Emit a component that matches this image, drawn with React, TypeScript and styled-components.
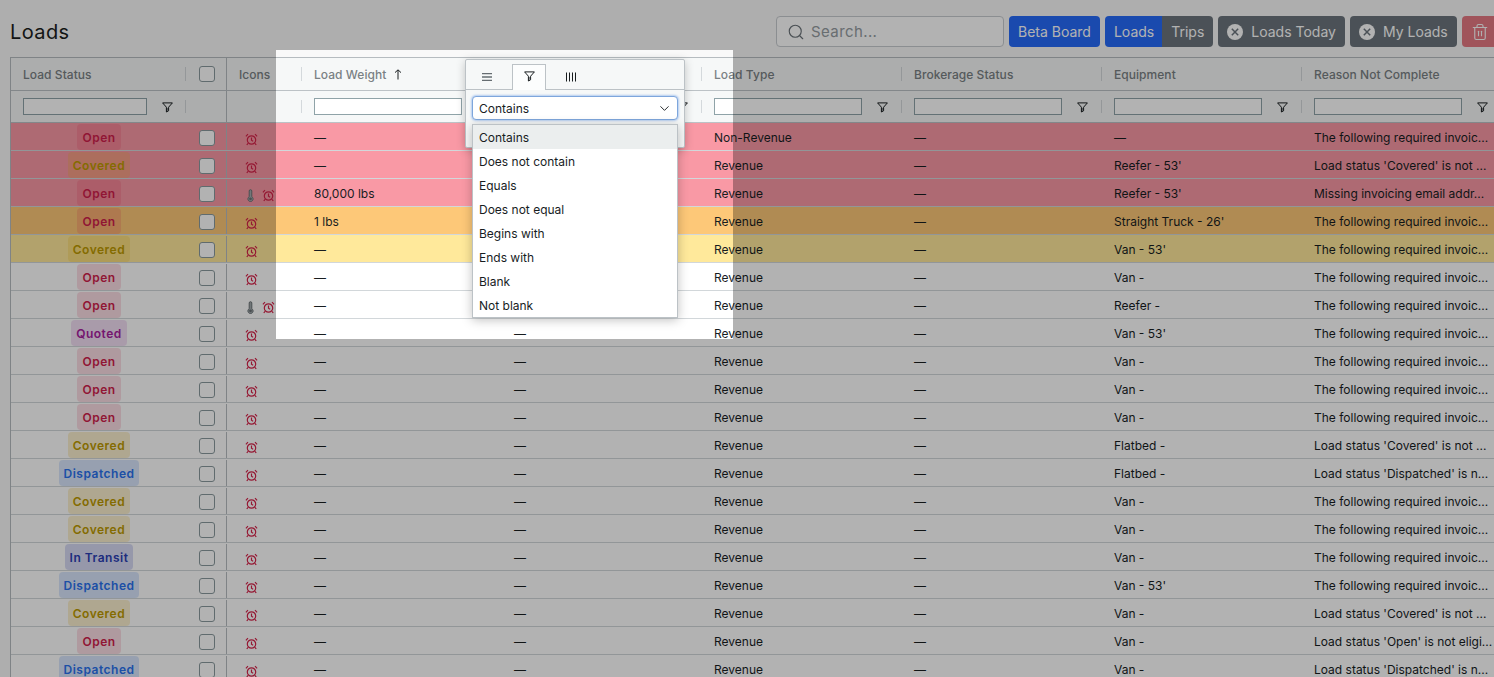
import React from 'react'
import styled, { createGlobalStyle } from 'styled-components'
import { ChevronDown, Search, Trash2 } from 'lucide-react'

const COLUMNS = '175px 41px 75px 200px 200px 200px 200px 200px 200px'

type Tone = 'red' | 'orange' | 'yellow' | 'none'
type Status = 'Open' | 'Covered' | 'Quoted' | 'Dispatched' | 'In Transit'

interface Load {
  status: Status
  tone?: Tone
  hot?: boolean
  weight?: string
  type?: string
  equipment: string
  reason: string
}

const REQUIRED = 'The following required invoic...'
const COVERED = "Load status 'Covered' is not ..."
const DISPATCHED = "Load status 'Dispatched' is n..."

const loads: Load[] = [
  { status: 'Open', tone: 'red', type: 'Non-Revenue', equipment: '—', reason: REQUIRED },
  { status: 'Covered', tone: 'red', equipment: "Reefer - 53'", reason: COVERED },
  { status: 'Open', tone: 'red', hot: true, weight: '80,000 lbs', equipment: "Reefer - 53'", reason: 'Missing invoicing email addr...' },
  { status: 'Open', tone: 'orange', weight: '1 lbs', equipment: "Straight Truck - 26'", reason: REQUIRED },
  { status: 'Covered', tone: 'yellow', equipment: "Van - 53'", reason: REQUIRED },
  { status: 'Open', equipment: 'Van -', reason: REQUIRED },
  { status: 'Open', hot: true, equipment: 'Reefer -', reason: REQUIRED },
  { status: 'Quoted', equipment: "Van - 53'", reason: REQUIRED },
  { status: 'Open', equipment: 'Van -', reason: REQUIRED },
  { status: 'Open', equipment: 'Van -', reason: REQUIRED },
  { status: 'Open', equipment: 'Van -', reason: REQUIRED },
  { status: 'Covered', equipment: 'Flatbed -', reason: COVERED },
  { status: 'Dispatched', equipment: 'Flatbed -', reason: DISPATCHED },
  { status: 'Covered', equipment: 'Van -', reason: REQUIRED },
  { status: 'Covered', equipment: 'Van -', reason: REQUIRED },
  { status: 'In Transit', equipment: 'Van -', reason: REQUIRED },
  { status: 'Dispatched', equipment: "Van - 53'", reason: REQUIRED },
  { status: 'Covered', equipment: 'Van -', reason: COVERED },
  { status: 'Open', equipment: 'Van -', reason: "Load status 'Open' is not eligi..." },
  { status: 'Dispatched', equipment: 'Van -', reason: DISPATCHED },
]

const filterOptions = ['Contains', 'Does not contain', 'Equals', 'Does not equal', 'Begins with', 'Ends with', 'Blank', 'Not blank']

const toneColors: Record<Tone, string> = {
  red: '#f999a5',
  orange: '#fdc878',
  yellow: '#ffe99b',
  none: '#ffffff',
}

const statusColors: Record<Status, { fg: string; bg: string }> = {
  Open: { fg: '#d01f4c', bg: 'rgba(225, 29, 72, 0.15)' },
  Covered: { fg: '#bd9a00', bg: 'rgba(234, 179, 8, 0.2)' },
  Quoted: { fg: '#a8219f', bg: 'rgba(168, 40, 180, 0.15)' },
  Dispatched: { fg: '#2a72ee', bg: 'rgba(59, 130, 246, 0.2)' },
  'In Transit': { fg: '#2b3fb5', bg: 'rgba(55, 70, 200, 0.2)' },
}

const GlobalStyle = createGlobalStyle`
  html, body {
    margin: 0;
    height: 100%;
    overflow: hidden;
    background: #f9f9f9;
    font-family: Inter, "Liberation Sans", sans-serif;
  }
`

const Page = styled.div`
  position: relative;
  width: 1494px;
  height: 677px;
  overflow: hidden;
`

const Toolbar = styled.div`
  display: flex;
  align-items: center;
  height: 31px;
  padding: 16px 0 10px 10px;
  white-space: nowrap;
`

const Title = styled.h1`
  flex: 0 0 auto;
  width: 766px;
  margin: 0;
  font-size: 20px;
  font-weight: 400;
  letter-spacing: 0.4px;
  color: #1a1d20;
`

const SearchBox = styled.div`
  flex: 0 0 auto;
  display: flex;
  align-items: center;
  gap: 6px;
  box-sizing: border-box;
  width: 228px;
  height: 31px;
  margin-right: 5px;
  padding: 0 10px;
  border: 1px solid #c8ccd0;
  border-radius: 4px;
  background: #ffffff;
  color: #6a7278;
  font-size: 15px;
  letter-spacing: 0.4px;
`

const Placeholder = styled.span`
  color: #959ca2;
`

const Button = styled.div<{ $bg?: string }>`
  flex: 0 0 auto;
  display: flex;
  align-items: center;
  gap: 8px;
  box-sizing: border-box;
  height: 31px;
  margin-right: 5px;
  padding: 0 9px;
  border-radius: 4px;
  background: ${(p) => p.$bg || '#6c757d'};
  color: #ffffff;
  font-size: 14px;
`

const Segments = styled.div`
  flex: 0 0 auto;
  display: flex;
  height: 31px;
  margin-right: 5px;
  border-radius: 4px;
  overflow: hidden;
`

const Segment = styled(Button)`
  margin: 0;
  border-radius: 0;

  &:first-child {
    padding-right: 8px;
  }
`

const DeleteButton = styled(Button)`
  background: #dc3545;
  opacity: 0.65;
  width: 100px;
`

const Grid = styled.div`
  margin-left: 10px;
  border: 1px solid #b6bcc0;
  border-right: 0;
  width: 1600px;
  font-size: 12px;
  color: #181d1f;
`

const HeadRow = styled.div`
  display: grid;
  grid-template-columns: ${COLUMNS};
  height: 33px;
  background: #f6f8f8;
  border-bottom: 1px solid #bcc2c6;
  box-sizing: border-box;
`

const FilterRow = styled(HeadRow)`
  height: 32px;
`

const HeadCell = styled.div<{ $sep?: boolean; $rule?: boolean; $check?: boolean }>`
  position: relative;
  display: flex;
  align-items: center;
  justify-content: ${(p) => (p.$check ? 'center' : 'flex-start')};
  min-width: 0;
  padding: ${(p) => (p.$check ? '0 0 0 2px' : '0 12px')};
  font-weight: 500;
  letter-spacing: 0.05px;
  color: #7a8184;
  border-right: ${(p) => (p.$rule ? '1px solid #b6bcc0' : '0')};
  box-sizing: border-box;

  ${(p) =>
    p.$sep &&
    `&::after {
      content: '';
      position: absolute;
      right: 0;
      top: 9px;
      bottom: 9px;
      width: 1px;
      background: #d4d9dc;
    }`}
`

const SortArrow = styled.svg`
  margin-left: 8px;
  color: #181d1f;
`

const FilterInput = styled.div`
  box-sizing: border-box;
  width: 148px;
  height: 17px;
  flex: 0 0 auto;
  border: 1px solid #8fa3a8;
  background: #ffffff;
`

const StatusInput = styled(FilterInput)`
  width: 124px;
`

const FunnelSlot = styled.span`
  display: flex;
  margin: 1px 0 0 15px;
  color: #181d1f;
`

const Row = styled.div<{ $tone: Tone }>`
  display: grid;
  grid-template-columns: ${COLUMNS};
  height: 28px;
  box-sizing: border-box;
  padding-top: 1px;
  background: ${(p) => toneColors[p.$tone]};
  border-bottom: 1px solid #d2d7da;
`

const Cell = styled.div`
  display: flex;
  align-items: center;
  min-width: 0;
  padding: 0 12px;
  white-space: nowrap;
`

const StatusCell = styled(Cell)`
  justify-content: center;
  padding: 0 0 0 1px;
`

const CheckCell = styled(Cell)`
  justify-content: center;
  padding: 1px 0 0 2px;
  border-right: 1px solid #b6bcc0;
`

const IconsCell = styled(Cell)`
  gap: 8px;
  padding: 4px 0 0 18px;
`

const Pill = styled.span<{ $status: Status }>`
  display: flex;
  align-items: center;
  height: 26px;
  padding: 0 5px;
  border-radius: 4px;
  font-weight: 600;
  letter-spacing: 0.5px;
  color: ${(p) => statusColors[p.$status].fg};
  background: ${(p) => statusColors[p.$status].bg};
`

const Checkbox = styled.span`
  box-sizing: border-box;
  width: 16px;
  height: 16px;
  border: 1px solid #8a9a9e;
  border-radius: 3px;
  background: #ffffff;
`

const Spotlight = styled.div`
  position: absolute;
  left: 276px;
  top: 50px;
  width: 457px;
  height: 289px;
  box-shadow: 0 0 0 2000px rgba(0, 0, 0, 0.3);
`

const Popup = styled.div`
  position: absolute;
  left: 189px;
  top: 9px;
  box-sizing: border-box;
  width: 220px;
  height: 89px;
  background: #f6f8f8;
  border: 1px solid #bcc2c6;
  border-radius: 2px;
  box-shadow: 0 2px 10px rgba(0, 0, 0, 0.22);
  font-size: 12px;
  color: #181d1f;
`

const TabBar = styled.div`
  display: flex;
  gap: 8px;
  height: 30px;
  box-sizing: border-box;
  padding: 4px 0 0 4px;
  border-bottom: 1px solid #bcc2c6;
`

const Tab = styled.div<{ $active?: boolean }>`
  display: flex;
  align-items: center;
  justify-content: center;
  box-sizing: border-box;
  width: 34px;
  height: 26px;
  padding-bottom: 2px;
  border: 1px solid ${(p) => (p.$active ? '#bcc2c6' : 'transparent')};
  border-bottom: 0;
  background: ${(p) => (p.$active ? '#fcfdfd' : 'transparent')};
  color: #666d71;
`

const ActiveFunnel = styled.span`
  display: flex;
  color: #181d1f;
`

const SelectBox = styled.div`
  display: flex;
  align-items: center;
  justify-content: space-between;
  box-sizing: border-box;
  width: 206px;
  height: 24px;
  margin: 6px 0 0 6px;
  padding: 0 5px 0 6px;
  background: #ffffff;
  border: 1px solid #7ea6dc;
  border-radius: 4px;
  box-shadow: 0 0 2px 1px rgba(80, 140, 230, 0.4);
`

const OptionList = styled.div`
  position: absolute;
  left: 6px;
  top: 64px;
  width: 206px;
  box-sizing: border-box;
  background: #ffffff;
  border: 1px solid #bcc2c6;
  box-shadow: 0 2px 10px rgba(0, 0, 0, 0.25);
`

const Option = styled.div<{ $active?: boolean }>`
  display: flex;
  align-items: center;
  height: 24px;
  padding: 0 6px;
  background: ${(p) => (p.$active ? '#ebeeee' : '#ffffff')};
`

const Funnel = () => (
  <svg width="11" height="11" viewBox="0 0 11 11" fill="none" stroke="currentColor" strokeWidth="1">
    <path d="M.6.9h9.8L6.6 5.2v3.6L4.4 10V5.2z" />
    <path d="M5.2 8.8V6" strokeWidth="1.3" opacity="0.6" />
  </svg>
)

const Clock = () => (
  <svg width="13" height="13" viewBox="0 0 13 13" fill="none" stroke="#d6234a" strokeWidth="1.2">
    <circle cx="6.5" cy="7" r="4.2" />
    <path d="M6.5 4.6v2.6l1.6 1M.9 3.4 3 1.2M12.1 3.4 10 1.2M3 10.4 1.8 12M10 10.4l1.2 1.6" />
  </svg>
)

const Thermometer = styled(({ className }: { className?: string }) => (
  <svg className={className} width="7" height="13" viewBox="0 0 7 13" fill="#a3abae" stroke="#6a7276" strokeWidth="1">
    <path d="M2.2 2a1.3 1.3 0 0 1 2.6 0v5.7a2.6 2.6 0 1 1-2.6 0z" />
    <circle cx="3.5" cy="9.8" r="1.4" fill="#6a7276" stroke="none" />
  </svg>
))`
  margin-left: 2px;
`

const MenuIcon = () => (
  <svg width="12" height="12" viewBox="0 0 12 12" stroke="currentColor" strokeWidth="1.4">
    <path d="M1 2.6h10M1 6h10M1 9.4h10" />
  </svg>
)

const ColumnsIcon = () => (
  <svg width="12" height="12" viewBox="0 0 12 12" stroke="#181d1f" strokeWidth="1">
    <path d="M1.5 1.5v9M4.5 1.5v9M7.5 1.5v9M10.5 1.5v9" />
  </svg>
)

const CircleX = () => (
  <svg width="16" height="16" viewBox="0 0 16 16">
    <circle cx="8" cy="8" r="8" fill="#ffffff" />
    <path d="M4.8 4.8l6.4 6.4M11.2 4.8l-6.4 6.4" stroke="#6c757d" strokeWidth="1.5" />
  </svg>
)

const FilterField = () => (
  <HeadCell $sep>
    <FilterInput />
    <FunnelSlot>
      <Funnel />
    </FunnelSlot>
  </HeadCell>
)

const App: React.FC = () => {
  return (
    <Page>
      <GlobalStyle />
      <Toolbar>
        <Title>Loads</Title>
        <SearchBox>
          <Search size={18} strokeWidth={1.5} />
          <Placeholder>Search...</Placeholder>
        </SearchBox>
        <Button $bg="#266bfa">Beta Board</Button>
        <Segments>
          <Segment $bg="#266bfa">Loads</Segment>
          <Segment>Trips</Segment>
        </Segments>
        <Button>
          <CircleX />
          Loads Today
        </Button>
        <Button>
          <CircleX />
          My Loads
        </Button>
        <DeleteButton>
          <Trash2 size={18} strokeWidth={1.5} />
          Delete
        </DeleteButton>
      </Toolbar>

      <Grid>
        <HeadRow>
          <HeadCell $sep>Load Status</HeadCell>
          <HeadCell $check $rule>
            <Checkbox />
          </HeadCell>
          <HeadCell $sep>Icons</HeadCell>
          <HeadCell>
            Load Weight
            <SortArrow width="8" height="11" viewBox="0 0 8 11" fill="none" stroke="currentColor" strokeWidth="1">
              <path d="M4 10.5V1M1 3.6 4 .8l3 2.8" />
            </SortArrow>
          </HeadCell>
          <HeadCell $sep />
          <HeadCell $sep>Load Type</HeadCell>
          <HeadCell $sep>Brokerage Status</HeadCell>
          <HeadCell $sep>Equipment</HeadCell>
          <HeadCell $sep>Reason Not Complete</HeadCell>
        </HeadRow>
        <FilterRow>
          <HeadCell $sep>
            <StatusInput />
            <FunnelSlot>
              <Funnel />
            </FunnelSlot>
          </HeadCell>
          <HeadCell $rule />
          <HeadCell $sep />
          <FilterField />
          <FilterField />
          <FilterField />
          <FilterField />
          <FilterField />
          <FilterField />
        </FilterRow>
        {loads.map((load, i) => (
          <Row key={i} $tone={load.tone || 'none'}>
            <StatusCell>
              <Pill $status={load.status}>{load.status}</Pill>
            </StatusCell>
            <CheckCell>
              <Checkbox />
            </CheckCell>
            <IconsCell>
              {load.hot && <Thermometer />}
              <Clock />
            </IconsCell>
            <Cell>{load.weight || '—'}</Cell>
            <Cell>—</Cell>
            <Cell>{load.type || 'Revenue'}</Cell>
            <Cell>—</Cell>
            <Cell>{load.equipment}</Cell>
            <Cell>{load.reason}</Cell>
          </Row>
        ))}
      </Grid>

      <Spotlight>
        <Popup>
          <TabBar>
            <Tab>
              <MenuIcon />
            </Tab>
            <Tab $active>
              <ActiveFunnel>
                <Funnel />
              </ActiveFunnel>
            </Tab>
            <Tab>
              <ColumnsIcon />
            </Tab>
          </TabBar>
          <SelectBox>
            Contains
            <ChevronDown size={15} strokeWidth={1.5} />
          </SelectBox>
          <OptionList>
            {filterOptions.map((option, i) => (
              <Option key={option} $active={i === 0}>
                {option}
              </Option>
            ))}
          </OptionList>
        </Popup>
      </Spotlight>
    </Page>
  )
}

export default App
